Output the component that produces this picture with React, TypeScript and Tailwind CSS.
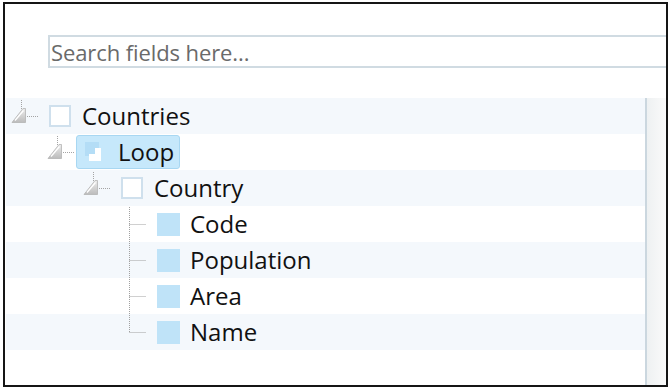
import React from 'react';

const font = { fontFamily: '"Open Sans", "Noto Sans", sans-serif' };

function Expander({ width }: { width: number }) {
  return (
    <svg width={width} height="36" viewBox={`0 0 ${width} 36`} className="shrink-0">
      <defs>
        <linearGradient id="tri" x1="0" y1="0" x2="0" y2="1">
          <stop offset="0" stopColor="#ececec" />
          <stop offset="1" stopColor="#bcbcbc" />
        </linearGradient>
      </defs>
      <line x1="13.5" y1="2" x2="13.5" y2="11" stroke="#a4a4a4" strokeDasharray="1 1" />
      <polygon points="4,24.5 17.5,24.5 17.5,10.5 15,10.5" fill="url(#tri)" stroke="#b4b4b4" strokeWidth="0.8" />
      <line x1="7" y1="22.5" x2="15.5" y2="12.5" stroke="#ffffff" strokeWidth="1.3" />
      <line x1="19" y1="18.5" x2="30" y2="18.5" stroke="#a4a4a4" strokeDasharray="1 1" />
    </svg>
  );
}

function LeafLines({ last }: { last?: boolean }) {
  return (
    <svg width="41" height="36" viewBox="0 0 41 36" className="shrink-0">
      <line x1="13.5" y1="1" x2="13.5" y2={last ? 19 : 36} stroke="#a0a0a0" strokeDasharray="1 1" />
      <line x1="13.5" y1="18.5" x2="30" y2="18.5" stroke="#a0a0a0" strokeDasharray="1 1" />
    </svg>
  );
}

function Checkbox() {
  return <div className="w-[22px] h-[22px] shrink-0 border-2 border-[#cfe0ed] bg-white" />;
}

function Leaf({ label, light, last }: { label: string; light?: boolean; last?: boolean }) {
  return (
    <div className={`h-[36px] flex items-center pl-[110px] ${light ? 'bg-[#f4f8fc]' : 'bg-white'}`}>
      <LeafLines last={last} />
      <div className="w-[23px] h-[23px] shrink-0 bg-[#bfe3f8]" />
      <span className="ml-[10px] text-[24px] leading-none text-[#111]">{label}</span>
    </div>
  );
}

export default function App() {
  return (
    <div className="w-[672px] h-[390px] bg-white pl-[3px] pt-[2px]" style={font}>
      <div className="w-[665px] h-[385px] border-2 border-[#151515] flex flex-col">
        {/* Search */}
        <div className="h-[94px] pt-[31px] pl-[43px] shrink-0">
          <div className="h-[33px] border-2 border-r-0 border-[#d0dbe2] flex items-center pl-[1px]">
            <span className="text-[22px] leading-none text-[#6a6a6a] tracking-[-0.1px]">Search fields here...</span>
          </div>
        </div>

        {/* Tree */}
        <div className="flex-1 flex">
          <div className="flex-1 pl-[1px]">
            <div className="h-[36px] flex items-center pl-[2px] bg-[#f4f8fc]">
              <Expander width={41} />
              <Checkbox />
              <span className="ml-[11px] text-[24px] leading-none text-[#111]">Countries</span>
            </div>
            <div className="h-[36px] flex items-center pl-[38px] bg-white">
              <Expander width={32} />
              <div className="h-[34px] flex items-center pl-[8px] pr-[5px] rounded-[3px] border border-[#a8d7f2] bg-[#c6e8fb]">
                <svg width="18" height="20" viewBox="0 0 18 20" className="shrink-0">
                  <rect x="0" y="0" width="14" height="14" fill="#a9d6f3" opacity="0.6" />
                  <polygon points="4,12 10,12 10,6 16,6 16,19 4,19" fill="#ffffff" />
                </svg>
                <span className="ml-[15px] text-[24px] leading-none text-[#111]">Loop</span>
              </div>
            </div>
            <div className="h-[36px] flex items-center pl-[74px] bg-[#f4f8fc]">
              <Expander width={41} />
              <Checkbox />
              <span className="ml-[11px] text-[24px] leading-none text-[#111]">Country</span>
            </div>
            <Leaf label="Code" />
            <Leaf label="Population" light />
            <Leaf label="Area" />
            <Leaf label="Name" light last />
          </div>
          <div className="w-[2px] bg-[#cbd7df]" />
          <div className="w-[19px] bg-gradient-to-r from-[#eef1f2] to-[#fafafa]" />
        </div>
      </div>
    </div>
  );
}
